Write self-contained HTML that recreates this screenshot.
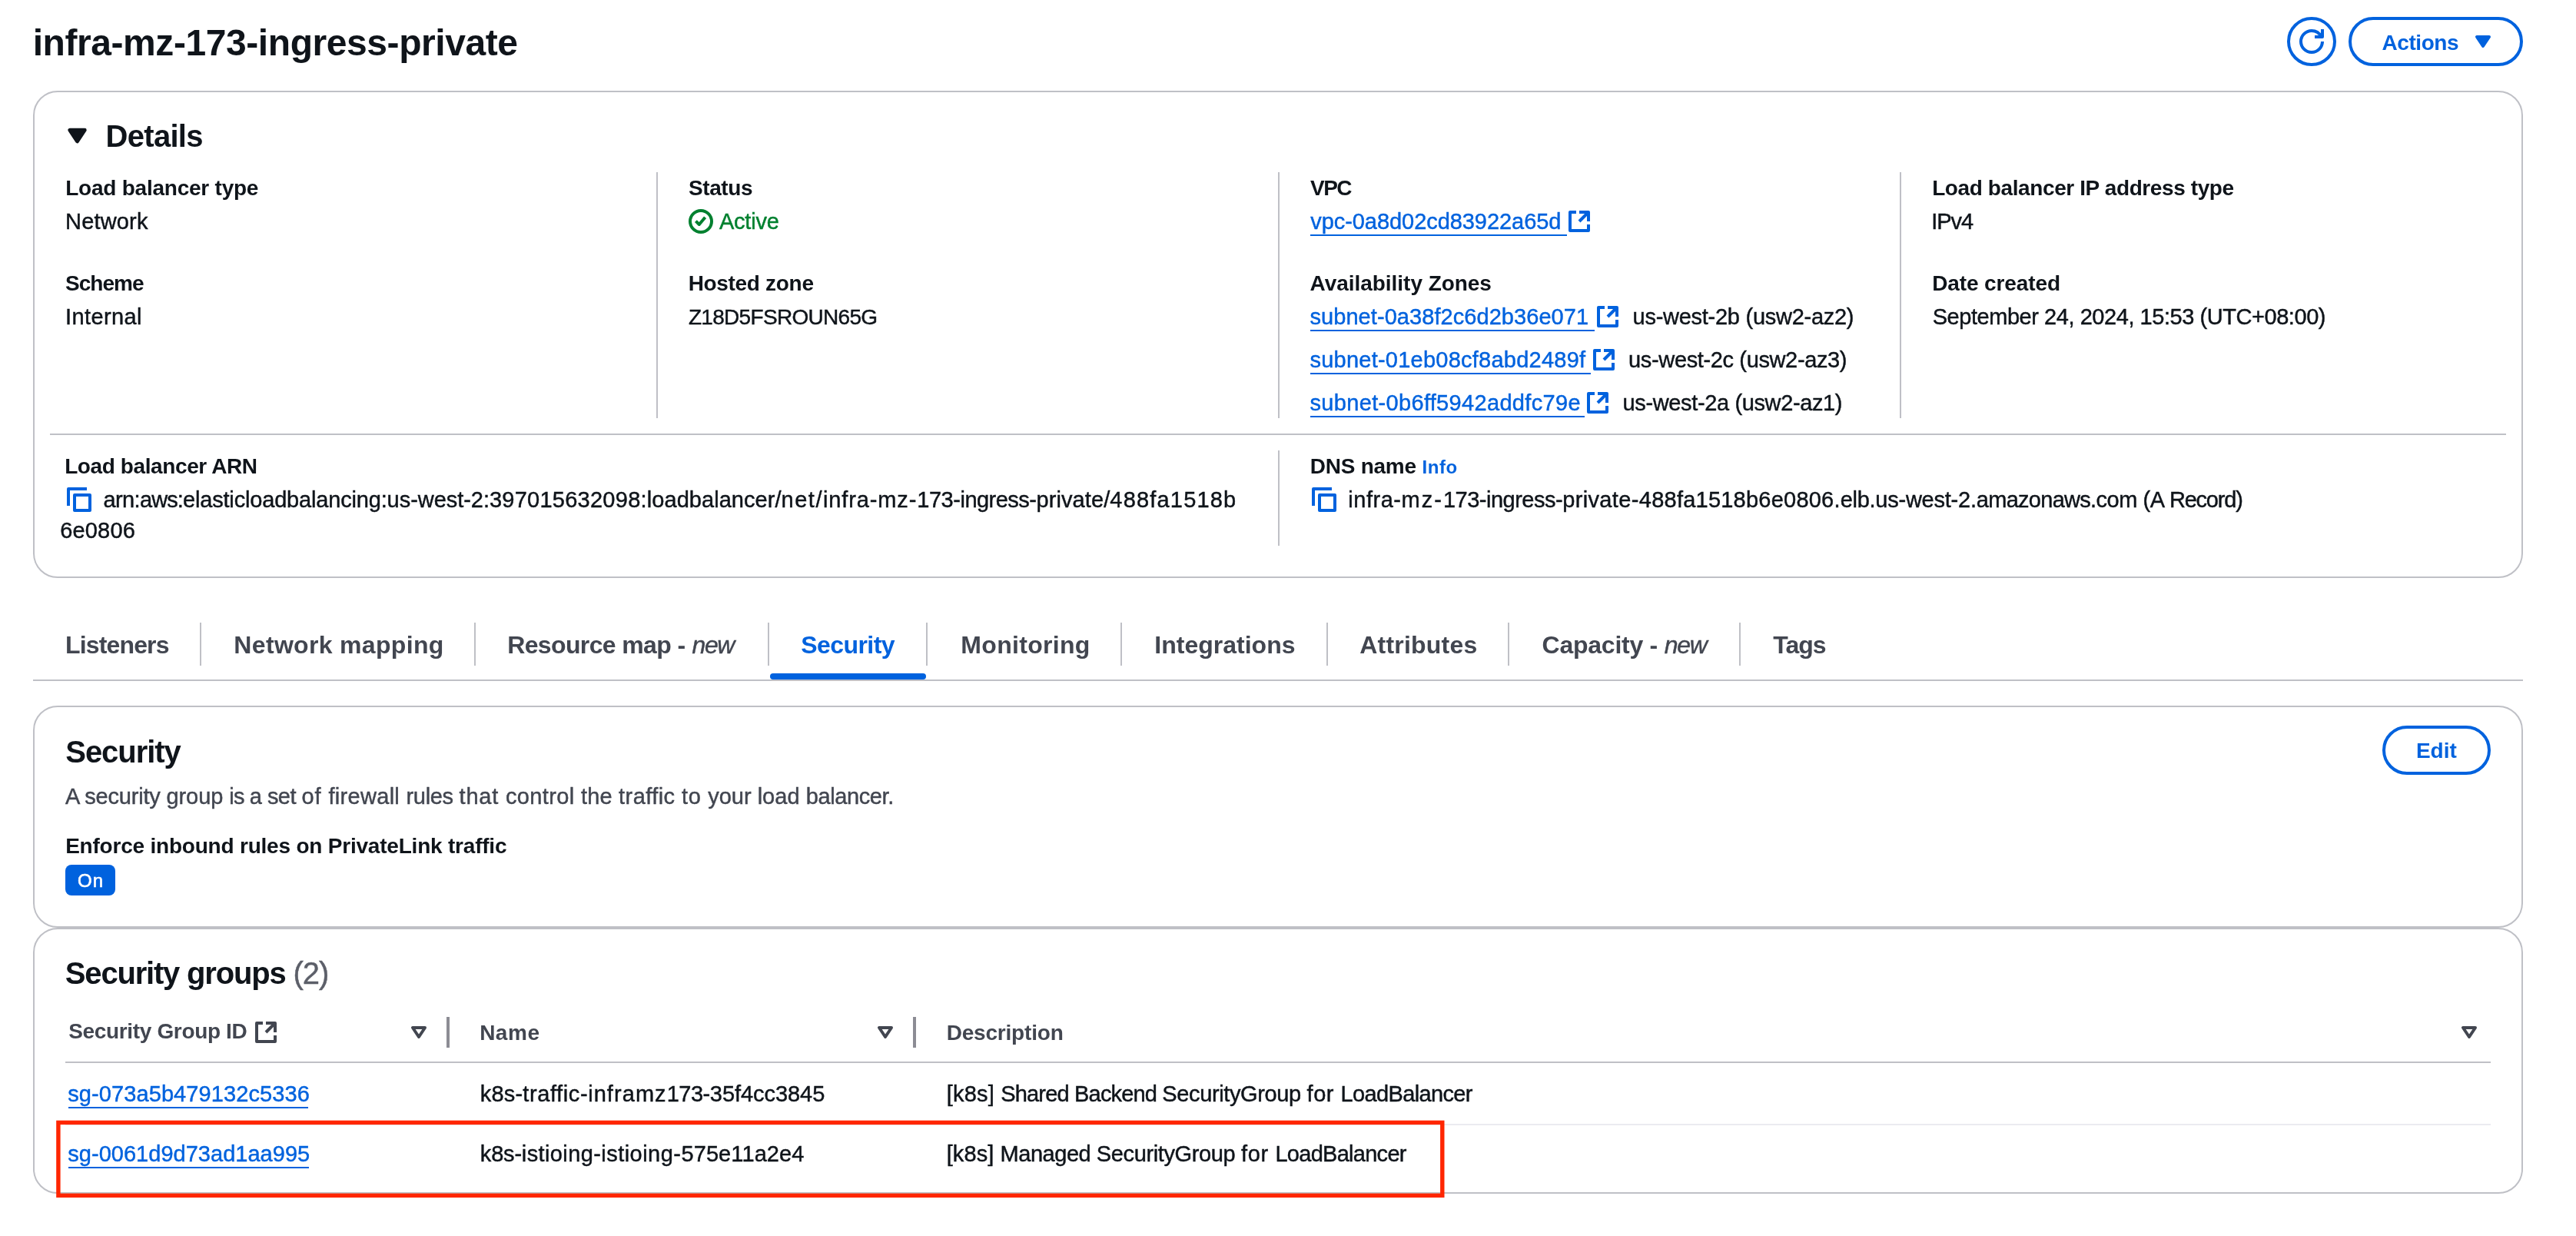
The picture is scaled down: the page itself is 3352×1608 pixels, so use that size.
<!DOCTYPE html>
<html><head><meta charset="utf-8"><title>infra-mz-173-ingress-private</title>
<style>
html,body{margin:0;padding:0;background:#fff;}
body{width:3352px;height:1608px;position:relative;overflow:hidden;font-family:"Liberation Sans",sans-serif;}
#w{position:absolute;left:0;top:0;width:3352px;height:1608px;will-change:transform;background:#fff;}
.t{position:absolute;white-space:nowrap;display:block;}
.r{position:absolute;box-sizing:border-box;}
svg{position:absolute;overflow:visible;}
</style></head><body><div id="w">
<div class="r" style="left:43px;top:118px;width:3240px;height:634px;border:2px solid #bfc0c6;border-radius:32px;"></div>
<div class="r" style="left:43px;top:918px;width:3240px;height:289px;border:2px solid #bfc0c6;border-radius:32px;"></div>
<div class="r" style="left:43px;top:1207px;width:3240px;height:346px;border:2px solid #bfc0c6;border-radius:32px;"></div>
<span class="t" style="left:42.65px;top:32px;font-size:48px;line-height:48px;letter-spacing:-0.425px;color:#0f141a;font-weight:700;">infra-mz-173-ingress-private</span>
<div class="r" style="left:2976px;top:22px;width:64px;height:64px;border:4px solid #0062de;border-radius:32px;"></div>
<svg style="left:2992px;top:38px" width="32" height="32" viewBox="0 0 16 16" fill="none" stroke="#0062de" stroke-width="2" stroke-linejoin="round"><path d="M15 8c0 3.87-3.13 7-7 7s-7-3.13-7-7 3.13-7 7-7c2.79 0 5.2 1.63 6.33 4"/><path d="M10 5h5V0"/></svg>
<div class="r" style="left:3056px;top:22px;width:227px;height:64px;border:4px solid #0062de;border-radius:32px;"></div>
<span class="t" style="left:3099.50px;top:42px;font-size:28px;line-height:28px;letter-spacing:-0.438px;color:#0062de;font-weight:700;">Actions</span>
<svg style="left:3215px;top:38px" width="32" height="32" viewBox="0 0 16 16" fill="#0062de" stroke="#0062de" stroke-width="2" stroke-linejoin="round"><path d="M4 5h8l-4 6-4-6Z"/></svg>
<svg style="left:81.3px;top:156.7px" width="39" height="39" viewBox="0 0 16 16" fill="#0f141a" stroke="#0f141a" stroke-width="2" stroke-linejoin="round"><path d="M4 5h8l-4 6-4-6Z"/></svg>
<span class="t" style="left:137.62px;top:157px;font-size:40px;line-height:40px;letter-spacing:-0.726px;color:#0f141a;font-weight:700;">Details</span>
<div class="r" style="left:854px;top:224px;width:2px;height:320px;background:#bfc0c6;"></div>
<div class="r" style="left:1663px;top:224px;width:2px;height:320px;background:#bfc0c6;"></div>
<div class="r" style="left:2472px;top:224px;width:2px;height:320px;background:#bfc0c6;"></div>
<div class="r" style="left:65px;top:564px;width:3196px;height:2px;background:#bfc0c6;"></div>
<div class="r" style="left:1663px;top:586px;width:2px;height:124px;background:#bfc0c6;"></div>
<span class="t" style="left:85.23px;top:231px;font-size:28px;line-height:28px;letter-spacing:-0.233px;color:#0f141a;font-weight:700;">Load balancer type</span>
<span class="t" style="left:85.12px;top:274px;font-size:29px;line-height:29px;letter-spacing:0.163px;color:#0f141a;-webkit-text-stroke:0.45px #0f141a;">Network</span>
<span class="t" style="left:85.09px;top:355px;font-size:28px;line-height:28px;letter-spacing:-0.986px;color:#0f141a;font-weight:700;">Scheme</span>
<span class="t" style="left:85.12px;top:398px;font-size:29px;line-height:29px;letter-spacing:0.384px;color:#0f141a;-webkit-text-stroke:0.45px #0f141a;">Internal</span>
<span class="t" style="left:895.99px;top:231px;font-size:28px;line-height:28px;letter-spacing:-0.403px;color:#0f141a;font-weight:700;">Status</span>
<svg style="left:896px;top:271.8px" width="32" height="32" viewBox="0 0 16 16" fill="none" stroke="#00802f" stroke-width="2" stroke-linejoin="round" stroke-linecap="butt"><circle cx="8" cy="8" r="7"/><path d="M4.7 7.8 6.9 10 10.8 5.4"/></svg>
<span class="t" style="left:935.94px;top:274px;font-size:29px;line-height:29px;letter-spacing:-0.225px;color:#00802f;-webkit-text-stroke:0.45px #00802f;">Active</span>
<span class="t" style="left:895.63px;top:355px;font-size:28px;line-height:28px;letter-spacing:-0.312px;color:#0f141a;font-weight:700;">Hosted zone</span>
<span class="t" style="left:895.91px;top:399px;font-size:28px;line-height:28px;letter-spacing:-0.693px;color:#0f141a;-webkit-text-stroke:0.45px #0f141a;">Z18D5FSROUN65G</span>
<span class="t" style="left:1705.11px;top:231px;font-size:28px;line-height:28px;letter-spacing:-1.658px;color:#0f141a;font-weight:700;">VPC</span>
<span class="t" style="left:1705.20px;top:274px;font-size:29px;line-height:29px;letter-spacing:-0.054px;color:#0062de;-webkit-text-stroke:0.45px #0062de;">vpc-0a8d02cd83922a65d</span>
<div class="r" style="left:1705.3px;top:304.5px;width:333.7px;height:2px;background:#0062de;"></div>
<svg style="left:2039px;top:272px" width="32" height="32" viewBox="0 0 16 16" fill="none" stroke="#0062de" stroke-width="2" stroke-linejoin="round"><path d="M14 8V2H8"/><path d="M14 2 8 8"/><path d="M6 2H2v12h12v-4"/></svg>
<span class="t" style="left:1704.60px;top:355px;font-size:28px;line-height:28px;letter-spacing:-0.040px;color:#0f141a;font-weight:700;">Availability Zones</span>
<span class="t" style="left:1704.49px;top:398px;font-size:29px;line-height:29px;letter-spacing:0.061px;color:#0062de;-webkit-text-stroke:0.45px #0062de;">subnet-0a38f2c6d2b36e071</span>
<div class="r" style="left:1705.3px;top:428.5px;width:369.7px;height:2px;background:#0062de;"></div>
<svg style="left:2075.5px;top:396px" width="32" height="32" viewBox="0 0 16 16" fill="none" stroke="#0062de" stroke-width="2" stroke-linejoin="round"><path d="M14 8V2H8"/><path d="M14 2 8 8"/><path d="M6 2H2v12h12v-4"/></svg>
<span class="t" style="left:2124.62px;top:398px;font-size:29px;line-height:29px;letter-spacing:-0.272px;color:#0f141a;-webkit-text-stroke:0.45px #0f141a;">us-west-2b (usw2-az2)</span>
<span class="t" style="left:1704.49px;top:454px;font-size:29px;line-height:29px;letter-spacing:0.236px;color:#0062de;-webkit-text-stroke:0.45px #0062de;">subnet-01eb08cf8abd2489f</span>
<div class="r" style="left:1705.3px;top:484.5px;width:365.2px;height:2px;background:#0062de;"></div>
<svg style="left:2071px;top:452px" width="32" height="32" viewBox="0 0 16 16" fill="none" stroke="#0062de" stroke-width="2" stroke-linejoin="round"><path d="M14 8V2H8"/><path d="M14 2 8 8"/><path d="M6 2H2v12h12v-4"/></svg>
<span class="t" style="left:2119.12px;top:454px;font-size:29px;line-height:29px;letter-spacing:-0.365px;color:#0f141a;-webkit-text-stroke:0.45px #0f141a;">us-west-2c (usw2-az3)</span>
<span class="t" style="left:1704.49px;top:510px;font-size:29px;line-height:29px;letter-spacing:0.328px;color:#0062de;-webkit-text-stroke:0.45px #0062de;">subnet-0b6ff5942addfc79e</span>
<div class="r" style="left:1705.3px;top:540.5px;width:357.2px;height:2px;background:#0062de;"></div>
<svg style="left:2062.8px;top:508px" width="32" height="32" viewBox="0 0 16 16" fill="none" stroke="#0062de" stroke-width="2" stroke-linejoin="round"><path d="M14 8V2H8"/><path d="M14 2 8 8"/><path d="M6 2H2v12h12v-4"/></svg>
<span class="t" style="left:2111.62px;top:510px;font-size:29px;line-height:29px;letter-spacing:-0.372px;color:#0f141a;-webkit-text-stroke:0.45px #0f141a;">us-west-2a (usw2-az1)</span>
<span class="t" style="left:2514.13px;top:231px;font-size:28px;line-height:28px;letter-spacing:-0.395px;color:#0f141a;font-weight:700;">Load balancer IP address type</span>
<span class="t" style="left:2513.32px;top:274px;font-size:29px;line-height:29px;letter-spacing:-1.101px;color:#0f141a;-webkit-text-stroke:0.45px #0f141a;">IPv4</span>
<span class="t" style="left:2514.13px;top:355px;font-size:28px;line-height:28px;letter-spacing:-0.106px;color:#0f141a;font-weight:700;">Date created</span>
<span class="t" style="left:2514.68px;top:398px;font-size:29px;line-height:29px;letter-spacing:-0.449px;color:#0f141a;-webkit-text-stroke:0.45px #0f141a;">September 24, 2024, 15:53 (UTC+08:00)</span>
<span class="t" style="left:84.13px;top:593px;font-size:28px;line-height:28px;letter-spacing:-0.392px;color:#0f141a;font-weight:700;">Load balancer ARN</span>
<svg style="left:87px;top:634px" width="32" height="32" viewBox="0 0 16 16" fill="none" stroke="#0062de" stroke-width="2" stroke-linejoin="round"><path d="M15 5H5v10h10V5Z"/><path d="M13 1H1v11"/></svg>
<span class="t" style="left:134.57px;top:636px;font-size:29px;line-height:29px;letter-spacing:-0.618px;color:#0f141a;-webkit-text-stroke:0.45px #0f141a;">arn:</span>
<span class="t" style="left:182.07px;top:636px;font-size:29px;line-height:29px;letter-spacing:-0.932px;color:#0f141a;-webkit-text-stroke:0.45px #0f141a;">aws:</span>
<span class="t" style="left:237.97px;top:636px;font-size:29px;line-height:29px;letter-spacing:-0.171px;color:#0f141a;-webkit-text-stroke:0.45px #0f141a;">elasticloadbalancing:</span>
<span class="t" style="left:503.62px;top:636px;font-size:29px;line-height:29px;letter-spacing:-0.048px;color:#0f141a;-webkit-text-stroke:0.45px #0f141a;">us-west-2:</span>
<span class="t" style="left:636.90px;top:636px;font-size:29px;line-height:29px;letter-spacing:0.258px;color:#0f141a;-webkit-text-stroke:0.45px #0f141a;">397015632098:</span>
<span class="t" style="left:841.85px;top:636px;font-size:29px;line-height:29px;letter-spacing:0.046px;color:#0f141a;-webkit-text-stroke:0.45px #0f141a;">loadbalancer/</span>
<span class="t" style="left:1016.57px;top:636px;font-size:29px;line-height:29px;letter-spacing:1.504px;color:#0f141a;-webkit-text-stroke:0.45px #0f141a;">net/</span>
<span class="t" style="left:1070.96px;top:636px;font-size:29px;line-height:29px;letter-spacing:0.883px;color:#0f141a;-webkit-text-stroke:0.45px #0f141a;">infra-mz-</span>
<span class="t" style="left:1193.29px;top:636px;font-size:29px;line-height:29px;letter-spacing:-0.468px;color:#0f141a;-webkit-text-stroke:0.45px #0f141a;">173-</span>
<span class="t" style="left:1249.46px;top:636px;font-size:29px;line-height:29px;letter-spacing:-0.521px;color:#0f141a;-webkit-text-stroke:0.45px #0f141a;">ingress-</span>
<span class="t" style="left:1348.43px;top:636px;font-size:29px;line-height:29px;letter-spacing:0.101px;color:#0f141a;-webkit-text-stroke:0.45px #0f141a;">private/</span>
<span class="t" style="left:1444.33px;top:636px;font-size:29px;line-height:29px;letter-spacing:1.186px;color:#0f141a;-webkit-text-stroke:0.45px #0f141a;">488fa1518b</span>
<span class="t" style="left:78.13px;top:676px;font-size:29px;line-height:29px;letter-spacing:0.195px;color:#0f141a;-webkit-text-stroke:0.45px #0f141a;">6e0806</span>
<span class="t" style="left:1704.83px;top:593px;font-size:28px;line-height:28px;letter-spacing:-0.273px;color:#0f141a;font-weight:700;">DNS name</span>
<span class="t" style="left:1850.39px;top:596px;font-size:24px;line-height:24px;letter-spacing:0.588px;color:#0062de;font-weight:700;">Info</span>
<svg style="left:1706.5px;top:634px" width="32" height="32" viewBox="0 0 16 16" fill="none" stroke="#0062de" stroke-width="2" stroke-linejoin="round"><path d="M15 5H5v10h10V5Z"/><path d="M13 1H1v11"/></svg>
<span class="t" style="left:1754.36px;top:636px;font-size:29px;line-height:29px;letter-spacing:0.507px;color:#0f141a;-webkit-text-stroke:0.45px #0f141a;">infra-</span>
<span class="t" style="left:1823.47px;top:636px;font-size:29px;line-height:29px;letter-spacing:2.034px;color:#0f141a;-webkit-text-stroke:0.45px #0f141a;">mz-</span>
<span class="t" style="left:1877.89px;top:636px;font-size:29px;line-height:29px;letter-spacing:-0.468px;color:#0f141a;-webkit-text-stroke:0.45px #0f141a;">173-</span>
<span class="t" style="left:1934.06px;top:636px;font-size:29px;line-height:29px;letter-spacing:-0.509px;color:#0f141a;-webkit-text-stroke:0.45px #0f141a;">ingress-</span>
<span class="t" style="left:2033.13px;top:636px;font-size:29px;line-height:29px;letter-spacing:0.375px;color:#0f141a;-webkit-text-stroke:0.45px #0f141a;">private-</span>
<span class="t" style="left:2132.83px;top:636px;font-size:29px;line-height:29px;letter-spacing:0.229px;color:#0f141a;-webkit-text-stroke:0.45px #0f141a;">488fa1518b6e0806.</span>
<span class="t" style="left:2394.77px;top:636px;font-size:29px;line-height:29px;letter-spacing:-0.302px;color:#0f141a;-webkit-text-stroke:0.45px #0f141a;">elb.</span>
<span class="t" style="left:2440.32px;top:636px;font-size:29px;line-height:29px;letter-spacing:-0.231px;color:#0f141a;-webkit-text-stroke:0.45px #0f141a;">us-west-2.</span>
<span class="t" style="left:2571.77px;top:636px;font-size:29px;line-height:29px;letter-spacing:-0.710px;color:#0f141a;-webkit-text-stroke:0.45px #0f141a;">amazonaws.</span>
<span class="t" style="left:2727.47px;top:636px;font-size:29px;line-height:29px;letter-spacing:-0.427px;color:#0f141a;-webkit-text-stroke:0.45px #0f141a;">com </span>
<span class="t" style="left:2788.60px;top:636px;font-size:29px;line-height:29px;letter-spacing:-0.379px;color:#0f141a;-webkit-text-stroke:0.45px #0f141a;">(A </span>
<span class="t" style="left:2822.92px;top:636px;font-size:29px;line-height:29px;letter-spacing:-1.211px;color:#0f141a;-webkit-text-stroke:0.45px #0f141a;">Record)</span>
<div class="r" style="left:43px;top:884px;width:3240px;height:2px;background:#bfc0c6;"></div>
<div class="r" style="left:260px;top:810px;width:2px;height:56px;background:#bfc0c6;"></div>
<div class="r" style="left:617px;top:810px;width:2px;height:56px;background:#bfc0c6;"></div>
<div class="r" style="left:998.5px;top:810px;width:2px;height:56px;background:#bfc0c6;"></div>
<div class="r" style="left:1205px;top:810px;width:2px;height:56px;background:#bfc0c6;"></div>
<div class="r" style="left:1458px;top:810px;width:2px;height:56px;background:#bfc0c6;"></div>
<div class="r" style="left:1725.7px;top:810px;width:2px;height:56px;background:#bfc0c6;"></div>
<div class="r" style="left:1961.7px;top:810px;width:2px;height:56px;background:#bfc0c6;"></div>
<div class="r" style="left:2263px;top:810px;width:2px;height:56px;background:#bfc0c6;"></div>
<span class="t" style="left:85.06px;top:823px;font-size:32px;line-height:32px;letter-spacing:-0.854px;color:#424650;font-weight:700;">Listeners</span>
<span class="t" style="left:304.36px;top:823px;font-size:32px;line-height:32px;letter-spacing:0.322px;color:#424650;font-weight:700;">Network mapping</span>
<span class="t" style="left:660.16px;top:823px;font-size:32px;line-height:32px;letter-spacing:-0.627px;color:#424650;font-weight:700;">Resource map -</span>
<span class="t" style="left:900.47px;top:823px;font-size:32px;line-height:32px;letter-spacing:-1.345px;color:#424650;-webkit-text-stroke:0.45px #424650;font-style:italic;">new</span>
<span class="t" style="left:1042.28px;top:823px;font-size:32px;line-height:32px;letter-spacing:-0.570px;color:#0062de;font-weight:700;">Security</span>
<div class="r" style="left:1002px;top:876px;width:203px;height:8px;background:#0062de;border-radius:4px;"></div>
<span class="t" style="left:1250.36px;top:823px;font-size:32px;line-height:32px;letter-spacing:0.300px;color:#424650;font-weight:700;">Monitoring</span>
<span class="t" style="left:1502.36px;top:823px;font-size:32px;line-height:32px;letter-spacing:0.003px;color:#424650;font-weight:700;">Integrations</span>
<span class="t" style="left:1769.20px;top:823px;font-size:32px;line-height:32px;letter-spacing:0.222px;color:#424650;font-weight:700;">Attributes</span>
<span class="t" style="left:2006.59px;top:823px;font-size:32px;line-height:32px;letter-spacing:-0.249px;color:#424650;font-weight:700;">Capacity -</span>
<span class="t" style="left:2165.67px;top:823px;font-size:32px;line-height:32px;letter-spacing:-1.245px;color:#424650;-webkit-text-stroke:0.45px #424650;font-style:italic;">new</span>
<span class="t" style="left:2307.24px;top:823px;font-size:32px;line-height:32px;letter-spacing:-0.980px;color:#424650;font-weight:700;">Tags</span>
<span class="t" style="left:85.25px;top:958px;font-size:40px;line-height:40px;letter-spacing:-1.041px;color:#0f141a;font-weight:700;">Security</span>
<span class="t" style="left:84.94px;top:1022px;font-size:29px;line-height:29px;letter-spacing:-0.225px;color:#424650;-webkit-text-stroke:0.45px #424650;">A </span>
<span class="t" style="left:110.29px;top:1022px;font-size:29px;line-height:29px;letter-spacing:-0.209px;color:#424650;-webkit-text-stroke:0.45px #424650;">security </span>
<span class="t" style="left:216.38px;top:1022px;font-size:29px;line-height:29px;letter-spacing:-0.042px;color:#424650;-webkit-text-stroke:0.45px #424650;">group </span>
<span class="t" style="left:298.36px;top:1022px;font-size:29px;line-height:29px;letter-spacing:-0.831px;color:#424650;-webkit-text-stroke:0.45px #424650;">is </span>
<span class="t" style="left:324.87px;top:1022px;font-size:29px;line-height:29px;letter-spacing:-0.580px;color:#424650;-webkit-text-stroke:0.45px #424650;">a </span>
<span class="t" style="left:347.89px;top:1022px;font-size:29px;line-height:29px;letter-spacing:-0.538px;color:#424650;-webkit-text-stroke:0.45px #424650;">set </span>
<span class="t" style="left:392.48px;top:1022px;font-size:29px;line-height:29px;letter-spacing:0.921px;color:#424650;-webkit-text-stroke:0.45px #424650;">of </span>
<span class="t" style="left:427.49px;top:1022px;font-size:29px;line-height:29px;letter-spacing:0.298px;color:#424650;-webkit-text-stroke:0.45px #424650;">firewall </span>
<span class="t" style="left:528.47px;top:1022px;font-size:29px;line-height:29px;letter-spacing:-0.305px;color:#424650;-webkit-text-stroke:0.45px #424650;">rules </span>
<span class="t" style="left:597.56px;top:1022px;font-size:29px;line-height:29px;letter-spacing:0.796px;color:#424650;-webkit-text-stroke:0.45px #424650;">that </span>
<span class="t" style="left:657.97px;top:1022px;font-size:29px;line-height:29px;letter-spacing:0.374px;color:#424650;-webkit-text-stroke:0.45px #424650;">control </span>
<span class="t" style="left:756.06px;top:1022px;font-size:29px;line-height:29px;letter-spacing:0.157px;color:#424650;-webkit-text-stroke:0.45px #424650;">the </span>
<span class="t" style="left:805.06px;top:1022px;font-size:29px;line-height:29px;letter-spacing:0.446px;color:#424650;-webkit-text-stroke:0.45px #424650;">traffic </span>
<span class="t" style="left:887.06px;top:1022px;font-size:29px;line-height:29px;letter-spacing:0.608px;color:#424650;-webkit-text-stroke:0.45px #424650;">to </span>
<span class="t" style="left:921.13px;top:1022px;font-size:29px;line-height:29px;letter-spacing:0.009px;color:#424650;-webkit-text-stroke:0.45px #424650;">your </span>
<span class="t" style="left:985.65px;top:1022px;font-size:29px;line-height:29px;letter-spacing:0.020px;color:#424650;-webkit-text-stroke:0.45px #424650;">load </span>
<span class="t" style="left:1048.63px;top:1022px;font-size:29px;line-height:29px;letter-spacing:-0.373px;color:#424650;-webkit-text-stroke:0.45px #424650;">balancer.</span>
<span class="t" style="left:85.13px;top:1087px;font-size:28px;line-height:28px;letter-spacing:-0.210px;color:#0f141a;font-weight:700;">Enforce inbound rules on PrivateLink traffic</span>
<div class="r" style="left:85px;top:1125px;width:65px;height:40px;background:#0062de;border-radius:8px;"></div>
<span class="t" style="left:100.96px;top:1134px;font-size:24px;line-height:24px;letter-spacing:1.180px;color:#fff;-webkit-text-stroke:0.6px #fff;">On</span>
<div class="r" style="left:3100px;top:944px;width:141px;height:64px;border:4px solid #0062de;border-radius:32px;"></div>
<span class="t" style="left:3143.93px;top:963px;font-size:28px;line-height:28px;letter-spacing:-0.023px;color:#0062de;font-weight:700;">Edit</span>
<span class="t" style="left:84.85px;top:1246px;font-size:40px;line-height:40px;letter-spacing:-1.194px;color:#0f141a;font-weight:700;">Security groups</span>
<span class="t" style="left:381.52px;top:1246px;font-size:40px;line-height:40px;letter-spacing:-1.063px;color:#5c5f69;-webkit-text-stroke:0.45px #5c5f69;">(2)</span>
<span class="t" style="left:89.19px;top:1328px;font-size:28px;line-height:28px;letter-spacing:-0.341px;color:#424650;font-weight:700;">Security Group ID</span>
<svg style="left:329.9px;top:1326.7px" width="32" height="32" viewBox="0 0 16 16" fill="none" stroke="#424650" stroke-width="2" stroke-linejoin="round"><path d="M14 8V2H8"/><path d="M14 2 8 8"/><path d="M6 2H2v12h12v-4"/></svg>
<svg style="left:528.5px;top:1327px" width="32" height="32" viewBox="0 0 16 16" fill="none" stroke="#424650" stroke-width="2" stroke-linejoin="round"><path d="M4 5h8l-4 6-4-6Z"/></svg>
<div class="r" style="left:581px;top:1323px;width:4px;height:40px;background:#8c8c94;"></div>
<span class="t" style="left:624.13px;top:1330px;font-size:28px;line-height:28px;letter-spacing:0.523px;color:#424650;font-weight:700;">Name</span>
<svg style="left:1136px;top:1327px" width="32" height="32" viewBox="0 0 16 16" fill="none" stroke="#424650" stroke-width="2" stroke-linejoin="round"><path d="M4 5h8l-4 6-4-6Z"/></svg>
<div class="r" style="left:1188px;top:1323px;width:4px;height:40px;background:#8c8c94;"></div>
<span class="t" style="left:1231.63px;top:1330px;font-size:28px;line-height:28px;letter-spacing:-0.192px;color:#424650;font-weight:700;">Description</span>
<svg style="left:3196.5px;top:1327px" width="32" height="32" viewBox="0 0 16 16" fill="none" stroke="#424650" stroke-width="2" stroke-linejoin="round"><path d="M4 5h8l-4 6-4-6Z"/></svg>
<div class="r" style="left:85px;top:1380.5px;width:3155.5px;height:2px;background:#bfc0c6;"></div>
<span class="t" style="left:88.29px;top:1409px;font-size:29px;line-height:29px;letter-spacing:0.086px;color:#0062de;-webkit-text-stroke:0.45px #0062de;">sg-073a5b479132c5336</span>
<div class="r" style="left:89.1px;top:1440px;width:312.4px;height:2px;background:#0062de;"></div>
<span class="t" style="left:624.85px;top:1409px;font-size:29px;line-height:29px;letter-spacing:0.182px;color:#0f141a;-webkit-text-stroke:0.45px #0f141a;">k8s-</span>
<span class="t" style="left:680.36px;top:1409px;font-size:29px;line-height:29px;letter-spacing:0.596px;color:#0f141a;-webkit-text-stroke:0.45px #0f141a;">traffic-</span>
<span class="t" style="left:765.16px;top:1409px;font-size:29px;line-height:29px;letter-spacing:1.066px;color:#0f141a;-webkit-text-stroke:0.45px #0f141a;">inframz</span>
<span class="t" style="left:867.69px;top:1409px;font-size:29px;line-height:29px;letter-spacing:-0.484px;color:#0f141a;-webkit-text-stroke:0.45px #0f141a;">173-</span>
<span class="t" style="left:923.80px;top:1409px;font-size:29px;line-height:29px;letter-spacing:-0.048px;color:#0f141a;-webkit-text-stroke:0.45px #0f141a;">35f4cc3845</span>
<span class="t" style="left:1231.73px;top:1409px;font-size:29px;line-height:29px;letter-spacing:0.192px;color:#0f141a;-webkit-text-stroke:0.45px #0f141a;">[k8s] </span>
<span class="t" style="left:1302.18px;top:1409px;font-size:29px;line-height:29px;letter-spacing:-0.805px;color:#0f141a;-webkit-text-stroke:0.45px #0f141a;">Shared </span>
<span class="t" style="left:1398.12px;top:1409px;font-size:29px;line-height:29px;letter-spacing:-0.844px;color:#0f141a;-webkit-text-stroke:0.45px #0f141a;">Backend </span>
<span class="t" style="left:1512.28px;top:1409px;font-size:29px;line-height:29px;letter-spacing:-0.365px;color:#0f141a;-webkit-text-stroke:0.45px #0f141a;">SecurityGroup </span>
<span class="t" style="left:1700.59px;top:1409px;font-size:29px;line-height:29px;letter-spacing:0.533px;color:#0f141a;-webkit-text-stroke:0.45px #0f141a;">for </span>
<span class="t" style="left:1744.62px;top:1409px;font-size:29px;line-height:29px;letter-spacing:-0.646px;color:#0f141a;-webkit-text-stroke:0.45px #0f141a;">LoadBalancer</span>
<div class="r" style="left:85px;top:1461.5px;width:3155.5px;height:2px;background:#ebebf0;"></div>
<span class="t" style="left:88.29px;top:1487px;font-size:29px;line-height:29px;letter-spacing:0.024px;color:#0062de;-webkit-text-stroke:0.45px #0062de;">sg-0061d9d73ad1aa995</span>
<div class="r" style="left:89.1px;top:1517.5px;width:312.9px;height:2px;background:#0062de;"></div>
<span class="t" style="left:624.85px;top:1487px;font-size:29px;line-height:29px;letter-spacing:-0.193px;color:#0f141a;-webkit-text-stroke:0.45px #0f141a;">k8s-</span>
<span class="t" style="left:678.86px;top:1487px;font-size:29px;line-height:29px;letter-spacing:0.386px;color:#0f141a;-webkit-text-stroke:0.45px #0f141a;">istioing-</span>
<span class="t" style="left:782.26px;top:1487px;font-size:29px;line-height:29px;letter-spacing:0.472px;color:#0f141a;-webkit-text-stroke:0.45px #0f141a;">istioing-</span>
<span class="t" style="left:886.44px;top:1487px;font-size:29px;line-height:29px;letter-spacing:0.098px;color:#0f141a;-webkit-text-stroke:0.45px #0f141a;">575e11a2e4</span>
<span class="t" style="left:1231.73px;top:1487px;font-size:29px;line-height:29px;letter-spacing:0.098px;color:#0f141a;-webkit-text-stroke:0.45px #0f141a;">[k8s] </span>
<span class="t" style="left:1301.62px;top:1487px;font-size:29px;line-height:29px;letter-spacing:-0.478px;color:#0f141a;-webkit-text-stroke:0.45px #0f141a;">Managed </span>
<span class="t" style="left:1426.78px;top:1487px;font-size:29px;line-height:29px;letter-spacing:-0.365px;color:#0f141a;-webkit-text-stroke:0.45px #0f141a;">SecurityGroup </span>
<span class="t" style="left:1615.09px;top:1487px;font-size:29px;line-height:29px;letter-spacing:0.608px;color:#0f141a;-webkit-text-stroke:0.45px #0f141a;">for </span>
<span class="t" style="left:1659.42px;top:1487px;font-size:29px;line-height:29px;letter-spacing:-0.719px;color:#0f141a;-webkit-text-stroke:0.45px #0f141a;">LoadBalancer</span>
<svg style="left:0;top:0" width="3352" height="1608"><rect x="75.9" y="1460.4" width="1800.9" height="94.9" fill="none" stroke="#ff2600" stroke-width="5.4"/></svg>
</div></body></html>
